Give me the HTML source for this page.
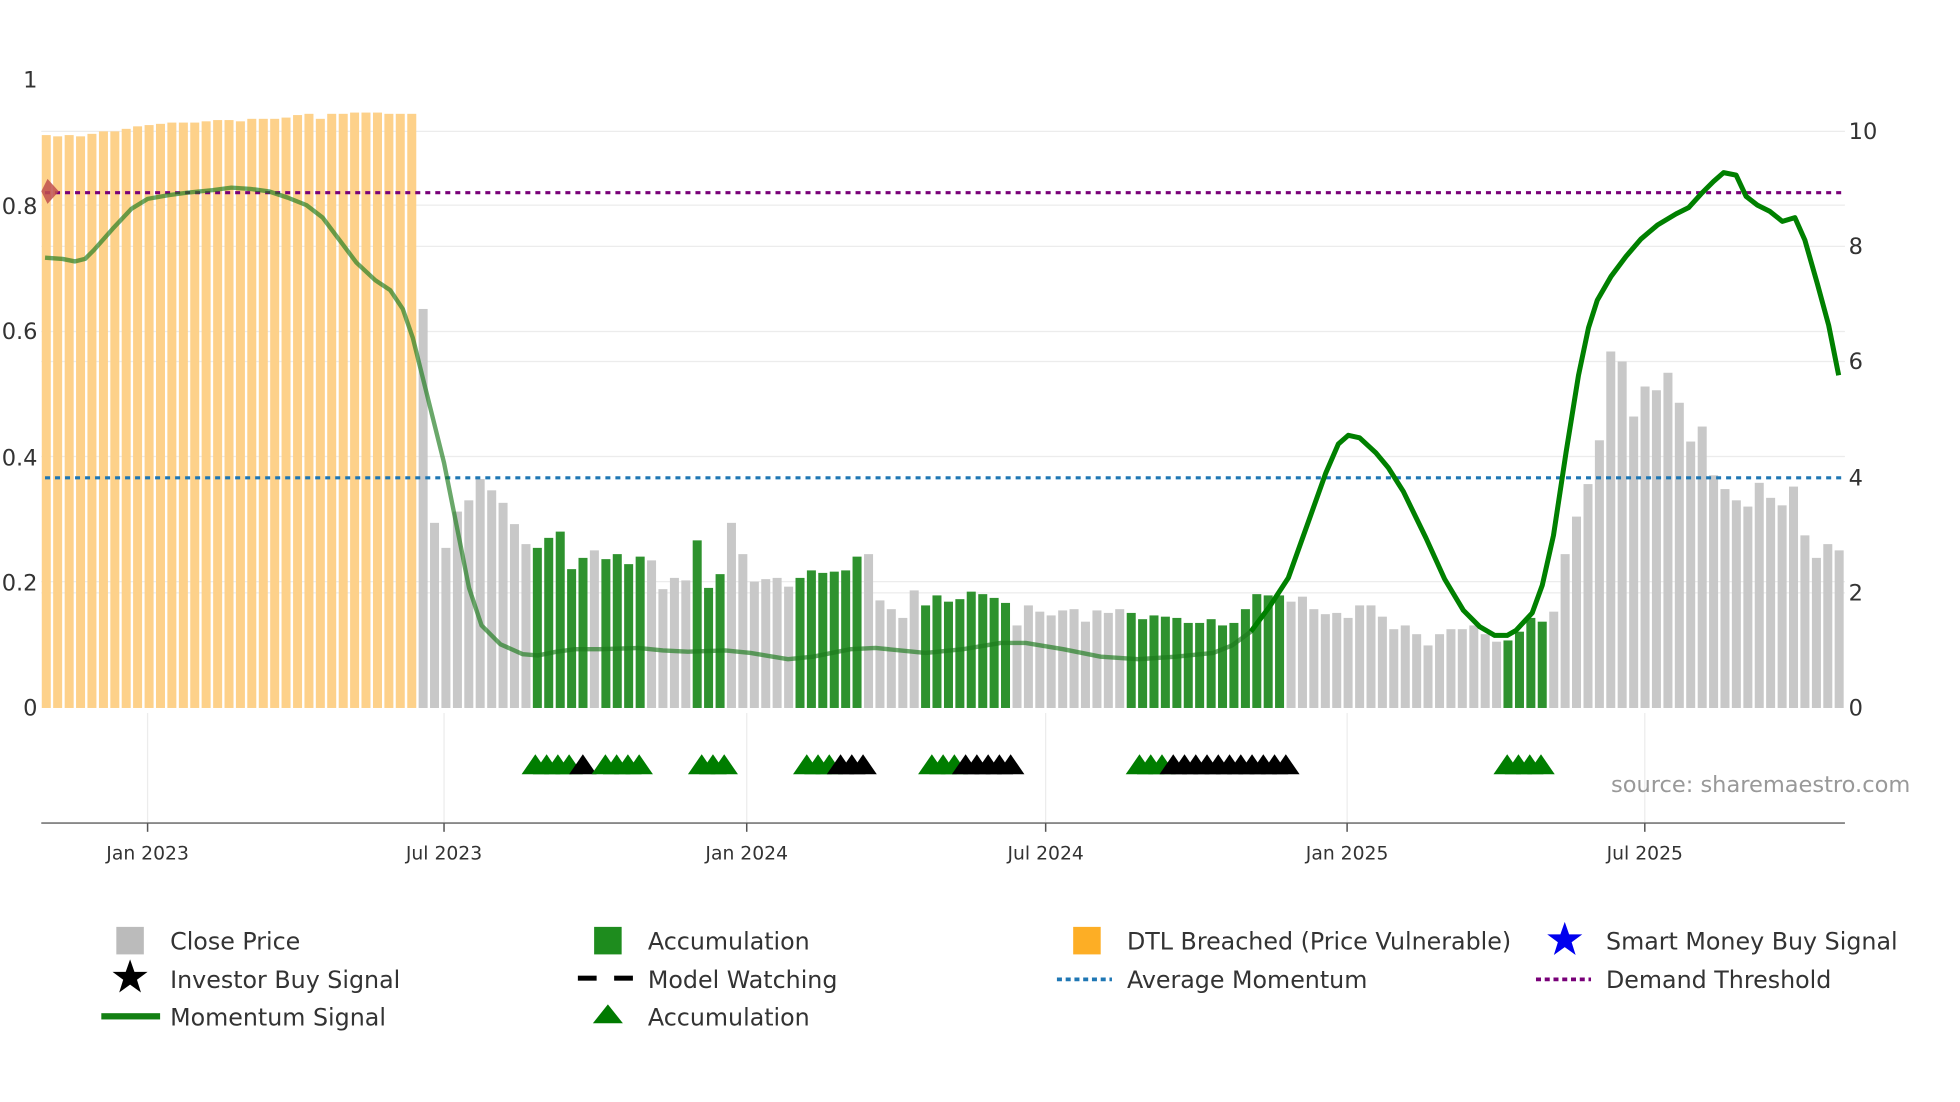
<!DOCTYPE html>
<html><head><meta charset="utf-8"><style>
html,body{margin:0;padding:0;background:#fff;width:1960px;height:1102px;overflow:hidden}
svg{display:block}
text{font-family:"DejaVu Sans","Liberation Sans",sans-serif}
</style></head><body>
<svg id="s" width="1960" height="1102" viewBox="0 0 1567 881" preserveAspectRatio="none" xmlns="http://www.w3.org/2000/svg">
<g stroke="#ececec" stroke-width="1">
<line x1="33" x2="1475" y1="164" y2="164"/><line x1="33" x2="1475" y1="265" y2="265"/>
<line x1="33" x2="1475" y1="365" y2="365"/><line x1="33" x2="1475" y1="465" y2="465"/>
<line x1="33" x2="1475" y1="105" y2="105"/><line x1="33" x2="1475" y1="197" y2="197"/>
<line x1="33" x2="1475" y1="289" y2="289"/><line x1="33" x2="1475" y1="474" y2="474"/>
<line x1="118" x2="118" y1="570" y2="658"/><line x1="355" x2="355" y1="570" y2="658"/>
<line x1="597" x2="597" y1="570" y2="658"/><line x1="836" x2="836" y1="570" y2="658"/>
<line x1="1077" x2="1077" y1="570" y2="658"/><line x1="1315" x2="1315" y1="570" y2="658"/>
</g>
<g id="bars"></g>
<line x1="36" x2="1473" y1="382" y2="382" stroke="#1f77b4" stroke-width="2.5" stroke-dasharray="4,4"/>
<line x1="36" x2="1473" y1="154" y2="154" stroke="#780078" stroke-width="2.5" stroke-dasharray="4,4"/>
<path id="mom1" fill="none" stroke="#1a7a1a" stroke-opacity="0.65" stroke-width="3.5" stroke-linejoin="round"/>
<path id="mom2" fill="none" stroke="#008000" stroke-width="4" stroke-linejoin="round"/>
<path d="M33,153 L38,143 L47,153 L38,163 Z" fill="#c0504d" opacity="0.85"/>
<g id="tri"></g>
<line x1="33" x2="1475" y1="658" y2="658" stroke="#888" stroke-width="1.5"/>
<g stroke="#555" stroke-width="1.2">
<line x1="118" x2="118" y1="658" y2="665"/><line x1="355" x2="355" y1="658" y2="665"/>
<line x1="597" x2="597" y1="658" y2="665"/><line x1="836" x2="836" y1="658" y2="665"/>
<line x1="1077" x2="1077" y1="658" y2="665"/><line x1="1315" x2="1315" y1="658" y2="665"/>
</g>
<g font-size="15" fill="#333" text-anchor="middle">
<text x="118" y="687">Jan 2023</text><text x="355" y="687">Jul 2023</text>
<text x="597" y="687">Jan 2024</text><text x="836" y="687">Jul 2024</text>
<text x="1077" y="687">Jan 2025</text><text x="1315" y="687">Jul 2025</text>
</g>
<g font-size="18" fill="#333" text-anchor="end">
<text x="30" y="70">1</text><text x="30" y="171">0.8</text><text x="30" y="271">0.6</text>
<text x="30" y="372">0.4</text><text x="30" y="472">0.2</text><text x="30" y="572">0</text>
</g>
<g font-size="18" fill="#333">
<text x="1478" y="111">10</text><text x="1478" y="203">8</text><text x="1478" y="295">6</text>
<text x="1478" y="388">4</text><text x="1478" y="480">2</text><text x="1478" y="572">0</text>
</g>
<text x="1288" y="633" font-size="18" fill="#999">source: sharemaestro.com</text>
<g font-size="19" fill="#333">
<rect x="93" y="741" width="22" height="22" fill="#bbb"/><text x="136" y="759">Close Price</text>
<path d="M104,767 l3.5,10 h10.5 l-8.5,6.3 l3.2,10.2 l-8.7,-6.3 l-8.7,6.3 l3.2,-10.2 l-8.5,-6.3 h10.5z" fill="#000"/><text x="136" y="790">Investor Buy Signal</text>
<rect x="81" y="810" width="47" height="5" fill="#138013"/><text x="136" y="820">Momentum Signal</text>
<rect x="475" y="741" width="22" height="22" fill="#1e8c1e"/><text x="518" y="759">Accumulation</text>
<rect x="462" y="780" width="15" height="4" fill="#000"/><rect x="491" y="780" width="15" height="4" fill="#000"/><text x="518" y="790">Model Watching</text>
<path d="M486,803 L498,818 L474,818Z" fill="#007a00"/><text x="518" y="820">Accumulation</text>
<rect x="858" y="741" width="22" height="22" fill="#fdae25"/><text x="901" y="759">DTL Breached (Price Vulnerable)</text>
<line x1="845" x2="889" y1="783" y2="783" stroke="#1f77b4" stroke-width="3" stroke-dasharray="4,3"/><text x="901" y="790">Average Momentum</text>
<path d="M1251,737 l3.5,10 h10.5 l-8.5,6.3 l3.2,10.2 l-8.7,-6.3 l-8.7,6.3 l3.2,-10.2 l-8.5,-6.3 h10.5z" fill="#0000ee"/><text x="1284" y="759">Smart Money Buy Signal</text>
<line x1="1228" x2="1272" y1="783" y2="783" stroke="#780078" stroke-width="3" stroke-dasharray="4,3"/><text x="1284" y="790">Demand Threshold</text>
</g>
</svg>
<script>
var tops=[108,109,108,109,107,105,105,103,101,100,99,98,98,98,97,96,96,97,95,95,95,94,92,91,95,91,91,90,90,90,91,91,91,
247,418,438,409,400,383,392,402,419,435,438,430,425,455,446,440,447,443,451,445,448,471,462,464,432,470,459,418,443,465,463,462,469,
462,456,458,457,456,445,443,480,487,494,472,484,476,481,479,473,475,478,482,500,484,489,492,488,487,497,488,490,487,
490,495,492,493,494,498,498,495,500,498,487,475,476,476,481,477,487,491,490,494,484,484,493,503,500,507,516,507,503,503,500,507,513,
512,505,494,497,489,443,413,387,352,281,289,333,309,312,298,322,353,341,380,391,400,405,386,398,404,389,428,446,435,440];
function green(i){return (i>=43&&i<=47)||(i>=49&&i<=52)||(i>=57&&i<=59)||(i>=66&&i<=71)||(i>=77&&i<=84)||(i>=95&&i<=108)||(i>=128&&i<=131);}
var g=document.getElementById("bars"),h="";
for(var i=0;i<tops.length;i++){var x=37+9.13*i-3.6,c=i<33?"#fdd18a":(green(i)?"#2e922e":"#c8c8c8");
h+='<rect x="'+x.toFixed(1)+'" y="'+tops[i]+'" width="7.2" height="'+(566-tops[i])+'" fill="'+c+'"/>';}
g.innerHTML=h;
var pts=[[36,206],[50,207],[60,209],[68,207],[75,200],[90,183],[105,167],[118,159],[135,156],[150,154],[170,152],[185,150],[200,151],[215,153],[230,158],[245,164],[258,174],[270,190],[285,210],[300,224],[312,232],[322,247],[330,270],[340,310],[355,370],[365,420],[375,470],[385,500],[400,515],[418,523],[430,524],[445,521],[460,519],[480,519],[510,518],[530,520],[550,521],[580,520],[600,522],[630,527],[650,525],[680,519],[700,518],[740,522],[770,519],[800,514],[820,514],[850,519],[880,525],[910,527],[940,525],[970,522],[985,516],[1000,505],[1015,485],[1030,462],[1045,420],[1060,378],[1070,355],[1078,348],[1087,350],[1100,362],[1110,374],[1122,393],[1140,430],[1155,463],[1170,488],[1183,501],[1195,508],[1205,508],[1212,504],[1225,490],[1233,468],[1242,428],[1252,362],[1262,300],[1270,262],[1277,240],[1288,221],[1300,205],[1312,191],[1325,180],[1340,171],[1350,166],[1360,155],[1370,145],[1378,138],[1388,140],[1396,157],[1405,164],[1415,169],[1425,177],[1435,174],[1443,192],[1453,227],[1462,260],[1470,300]];
var d1="",d2="";pts.forEach(function(p,k){d1+=(k?"L":"M")+p[0]+","+p[1];});
var f=1;pts.forEach(function(p){if(p[0]>=1000){d2+=(f?"M":"L")+p[0]+","+p[1];f=0;}});
document.getElementById("mom1").setAttribute("d",d1);document.getElementById("mom2").setAttribute("d",d2);
var tri=[[428,"g"],[437,"g"],[446,"g"],[455,"g"],[466,"k"],[484,"g"],[493,"g"],[502,"g"],[511,"g"],
[561,"g"],[570,"g"],[579,"g"],[645,"g"],[654,"g"],[663,"g"],[672,"k"],[681,"k"],[690,"k"],
[745,"g"],[754,"g"],[763,"g"],[772,"k"],[781,"k"],[790,"k"],[799,"k"],[808,"k"],
[911,"g"],[920,"g"],[929,"g"],[938,"k"],[947,"k"],[956,"k"],[965,"k"],[974,"k"],[983,"k"],[992,"k"],[1001,"k"],[1010,"k"],[1019,"k"],[1028,"k"],
[1205,"g"],[1214,"g"],[1223,"g"],[1232,"g"]];
var t="";tri.forEach(function(a){t+='<path d="M'+a[0]+',603 L'+(a[0]+11)+',619 L'+(a[0]-11)+',619Z" fill="'+(a[1]=="g"?"#007d00":"#000")+'"/>';});
document.getElementById("tri").innerHTML=t;
</script>
</body></html>
